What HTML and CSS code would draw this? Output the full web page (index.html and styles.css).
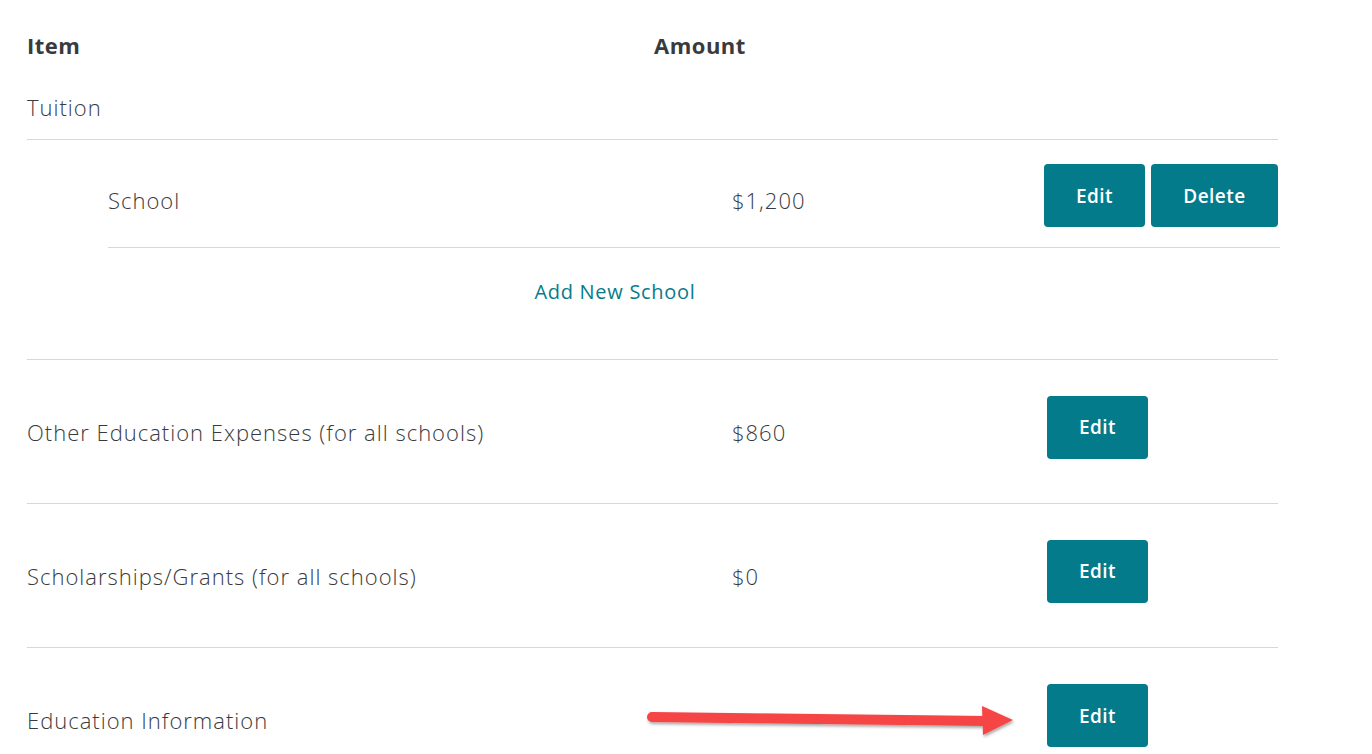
FILE: index.html
```html
<!DOCTYPE html>
<html>
<head>
<meta charset="utf-8">
<link rel="stylesheet" href="styles.css">
</head>
<body>
<div class="page">
  <div class="head-row">
    <div class="h-item">Item</div>
    <div class="h-amount">Amount</div>
  </div>
  <div class="group-title">Tuition</div>
  <div class="nested-wrap">
    <div class="nested">
      <div class="row nested-row">
        <div class="label">School</div>
        <div class="amount">$1,200</div>
        <div class="actions">
          <button class="btn btn-edit">Edit</button>
          <button class="btn btn-delete">Delete</button>
        </div>
      </div>
      <div class="add-row"><a class="add-link">Add New School</a></div>
    </div>
  </div>
  <div class="row top-row">
    <div class="label">Other Education Expenses (for all schools)</div>
    <div class="amount">$860</div>
    <div class="actions"><button class="btn btn-edit">Edit</button></div>
  </div>
  <div class="row top-row">
    <div class="label">Scholarships/Grants (for all schools)</div>
    <div class="amount">$0</div>
    <div class="actions"><button class="btn btn-edit">Edit</button></div>
  </div>
  <div class="row top-row last">
    <div class="label">Education Information</div>
    <div class="amount"></div>
    <div class="actions"><button class="btn btn-edit">Edit</button></div>
  </div>
  <svg class="arrow" width="400" height="50" viewBox="0 0 400 50">
    <defs>
      <filter id="sh" x="-10%" y="-50%" width="120%" height="200%">
        <feDropShadow dx="1" dy="2" stdDeviation="1.5" flood-color="#000" flood-opacity="0.35"/>
      </filter>
    </defs>
    <g filter="url(#sh)">
      <line x1="10" y1="17" x2="345" y2="21" stroke="#f54545" stroke-width="10" stroke-linecap="round"/>
      <polygon points="340,6 371,20 341,35" fill="#f54545"/>
    </g>
  </svg>
</div>
</body>
</html>
```
FILE: styles.css
```css
html, body {
  margin: 0;
  padding: 0;
  background: #ffffff;
}
body {
  font-family: "Open Sans", "Liberation Sans", sans-serif;
  color: #393a3d;
  overflow: hidden;
}
.page {
  position: relative;
  width: 1251px;
  margin-left: 27px;
}
.head-row {
  display: flex;
  height: 90px;
  align-items: center;
  font-weight: 700;
  font-size: 22px;
  letter-spacing: 0.5px;
}
.h-item {
  width: 627px;
  flex-shrink: 0;
}
.group-title {
  font-size: 22px;
  font-weight: 300;
  letter-spacing: 1px;
  margin-top: -18px;
  height: 68px;
  padding-top: 16px;
  line-height: 38px;
  border-bottom: 1px solid #d4d7dc;
  box-sizing: border-box;
}
.nested-wrap {
  border-bottom: 1px solid #d4d7dc;
}
.nested {
  margin-left: 81px;
  margin-right: -2px;
}
.row {
  display: flex;
  align-items: center;
  font-size: 22px;
  font-weight: 300;
  letter-spacing: 1px;
}
.label, .amount {
  flex-shrink: 0;
}
.nested-row {
  height: 108px;
  border-bottom: 1px solid #d4d7dc;
  box-sizing: border-box;
  padding-top: 4px;
}
.nested-row .label {
  width: 624px;
  padding-top: 9px;
}
.nested-row .amount {
  width: 312px;
  padding-top: 9px;
}
.top-row {
  height: 144px;
  border-bottom: 1px solid #d4d7dc;
  box-sizing: border-box;
  padding-bottom: 9px;
}
.top-row.last {
  border-bottom: none;
}
.top-row .label {
  width: 705px;
  padding-top: 9px;
}
.top-row .amount {
  width: 315px;
  padding-top: 9px;
}
.actions {
  display: flex;
  gap: 6px;
  flex-shrink: 0;
}
.btn {
  font-family: "Open Sans", "Liberation Sans", sans-serif;
  font-size: 19px;
  font-weight: 600;
  letter-spacing: 0.5px;
  color: #ffffff;
  background: #047b8a;
  border: none;
  border-radius: 4px;
  height: 63px;
  width: 101px;
  padding: 0;
  cursor: pointer;
}
.btn-delete {
  width: 127px;
}
.add-row {
  height: 111px;
  display: flex;
  align-items: flex-start;
  justify-content: center;
  padding-right: 158px;
  padding-top: 30px;
  box-sizing: border-box;
}
.add-link {
  color: #087b8a;
  font-size: 20px;
  font-weight: 400;
  letter-spacing: 0.7px;
}
.arrow {
  position: absolute;
  left: 615px;
  top: 700px;
}
```
